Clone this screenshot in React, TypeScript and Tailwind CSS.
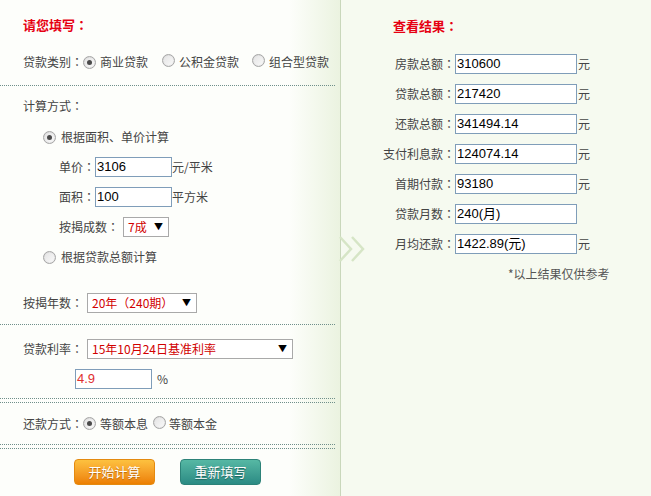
import type { ReactNode } from "react"

const FONT = { fontFamily: '"Microsoft YaHei", "Noto Sans CJK SC", sans-serif' }

// 全角冒号居中显示（SC 字形偏左）
function Label({ text, className = "" }: { text: string; className?: string }) {
    const body = text.endsWith("：") ? text.slice(0, -1) : text
    return (
        <span className={className}>
            {body}
            {text.endsWith("：") && <span style={{ fontFamily: '"Noto Sans CJK TC", sans-serif' }}>：</span>}
        </span>
    )
}

// 单选框（仿旧版浏览器灰色样式）
function Radio({ checked }: { checked?: boolean }) {
    return (
        <span className="inline-flex h-[13px] w-[13px] shrink-0 items-center justify-center rounded-full border border-[#a6a6a6] bg-gradient-to-br from-[#e3e3e3] to-[#fafafa] shadow-[inset_0_0_1px_#bbb]">
            {checked && <span className="h-[5px] w-[5px] rounded-full bg-[#4a4a4a]" />}
        </span>
    )
}

function TextBox({ value, w, red }: { value: string; w: string; red?: boolean }) {
    return (
        <div
            className={`flex h-[20px] items-center border border-[#7f9db9] bg-white pl-[1px] text-[13px] ${w} ${red ? "text-[#e03030]" : "text-black"}`}
            style={{ fontFamily: '"Liberation Sans", "Noto Sans CJK SC", sans-serif' }}
        >
            {value}
        </div>
    )
}

function Select({ value, w }: { value: string; w: string }) {
    return (
        <div className={`flex h-[20px] items-center justify-between border border-[#a9a9a9] bg-white pl-[4px] pr-[5px] text-[12px] text-[#d10000] ${w}`}>
            <span>{value}</span>
            <span className="text-[9px] text-black">▼</span>
        </div>
    )
}

function Dotted({ double, className = "" }: { double?: boolean; className?: string }) {
    return double ? (
        <div className={`h-[5px] border-y border-dotted border-[#6f8f8a] ${className}`} />
    ) : (
        <div className={`border-b border-dotted border-[#6f8f8a] ${className}`} />
    )
}

function ResultRow({ label, value, unit = true }: { label: string; value: string; unit?: boolean }) {
    return (
        <div className="flex h-[30px] items-center">
            <Label text={label} className="w-[114px] text-right" />
            <TextBox value={value} w="w-[122px]" />
            {unit && <span className="ml-[1px]">元</span>}
        </div>
    )
}

function Row({ children, className = "" }: { children: ReactNode; className?: string }) {
    return <div className={`flex items-center ${className}`}>{children}</div>
}

export default function App() {
    return (
        <div className="flex h-[496px] w-[651px] overflow-hidden text-[12px] text-[#444]" style={FONT}>
            {/* 左侧：填写区 */}
            <div className="relative w-[340px] shrink-0 bg-gradient-to-r from-[#fdfefb] from-85% to-[#ebf3e0]">
                <Row className="h-[50px] pl-[23px] text-[13px] font-bold text-[#e60012]">
                    <Label text="请您填写：" />
                </Row>
                <Row className="h-[24px] pl-[23px]">
                    <Label text="贷款类别：" />
                    <Radio checked />
                    <span className="ml-[4px]">商业贷款</span>
                    <span className="ml-[14px]"><Radio /></span>
                    <span className="ml-[4px]">公积金贷款</span>
                    <span className="ml-[13px]"><Radio /></span>
                    <span className="ml-[4px]">组合型贷款</span>
                </Row>
                <Dotted className="h-[12px] w-[335px]" />

                <Row className="h-[36px] pl-[23px] pt-[4px]">
                    <Label text="计算方式：" />
                </Row>
                <Row className="h-[30px] pl-[43px]">
                    <Radio checked />
                    <span className="ml-[5px]">根据面积、单价计算</span>
                </Row>
                <Row className="h-[30px] pl-[59px]">
                    <Label text="单价：" />
                    <TextBox value="3106" w="w-[77px]" />
                    <span>元/平米</span>
                </Row>
                <Row className="h-[30px] pl-[59px]">
                    <Label text="面积：" />
                    <TextBox value="100" w="w-[77px]" />
                    <span>平方米</span>
                </Row>
                <Row className="h-[30px] pl-[59px]">
                    <Label text="按揭成数：" className="w-[64px]" />
                    <Select value="7成" w="w-[46px]" />
                </Row>
                <Row className="h-[30px] pl-[43px]">
                    <Radio />
                    <span className="ml-[5px]">根据贷款总额计算</span>
                </Row>

                <Row className="mt-[16px] h-[30px] pl-[23px]">
                    <Label text="按揭年数：" className="w-[64px]" />
                    <Select value="20年（240期）" w="w-[110px]" />
                </Row>
                <Dotted className="h-[7px] w-[335px]" />

                <Row className="mt-[14px] h-[20px] pl-[23px]">
                    <Label text="贷款利率：" className="w-[64px]" />
                    <Select value="15年10月24日基准利率" w="w-[206px]" />
                </Row>
                <Row className="mt-[10px] h-[20px] pl-[75px]">
                    <TextBox value="4.9" w="w-[77px]" red />
                    <span className="ml-[5px]">%</span>
                </Row>
                <Dotted double className="mt-[9px] w-[335px]" />

                <Row className="h-[41px] pl-[23px]">
                    <Label text="还款方式：" />
                    <Radio checked />
                    <span className="ml-[4px]">等额本息</span>
                    <span className="ml-[5px]"><Radio /></span>
                    <span className="ml-[3px]">等额本金</span>
                </Row>
                <Dotted double className="w-[335px]" />

                <div className="flex gap-[25px] pl-[74px] pt-[10px]">
                    <button className="h-[26px] w-[81px] rounded-[4px] border border-[#e48a10] bg-gradient-to-b from-[#fdc13f] to-[#ec7f00] text-[13px] text-white [text-shadow:0_1px_1px_#b86400]">
                        开始计算
                    </button>
                    <button className="h-[26px] w-[81px] rounded-[4px] border border-[#2c8278] bg-gradient-to-b from-[#56b8a4] to-[#2b8b84] text-[13px] text-white [text-shadow:0_1px_1px_#1d5e58]">
                        重新填写
                    </button>
                </div>

                {/* 双箭头装饰 */}
                <svg className="absolute left-[338px] top-[234px]" width="32" height="30" viewBox="0 0 32 30">
                    <path d="M2 3 L13 15 L2 27" fill="none" stroke="#d6e5c6" strokeWidth="2.5" />
                    <path d="M14 3 L25 15 L14 27" fill="none" stroke="#d6e5c6" strokeWidth="2.5" />
                </svg>
            </div>

            {/* 右侧：结果区 */}
            <div className="flex-1 border-l border-[#c9d7bb] bg-[#f6faf0]">
                <Row className="h-[52px] pl-[52px] text-[13px] font-bold text-[#e60012]">
                    <Label text="查看结果：" />
                </Row>
                <div className="-mt-[3px]">
                    <ResultRow label="房款总额：" value="310600" />
                    <ResultRow label="贷款总额：" value="217420" />
                    <ResultRow label="还款总额：" value="341494.14" />
                    <ResultRow label="支付利息款：" value="124074.14" />
                    <ResultRow label="首期付款：" value="93180" />
                    <ResultRow label="贷款月数：" value="240(月)" unit={false} />
                    <ResultRow label="月均还款：" value="1422.89(元)" />
                </div>
                <Row className="h-[30px] pl-[167px] text-[#555]">*以上结果仅供参考</Row>
            </div>
        </div>
    )
}
